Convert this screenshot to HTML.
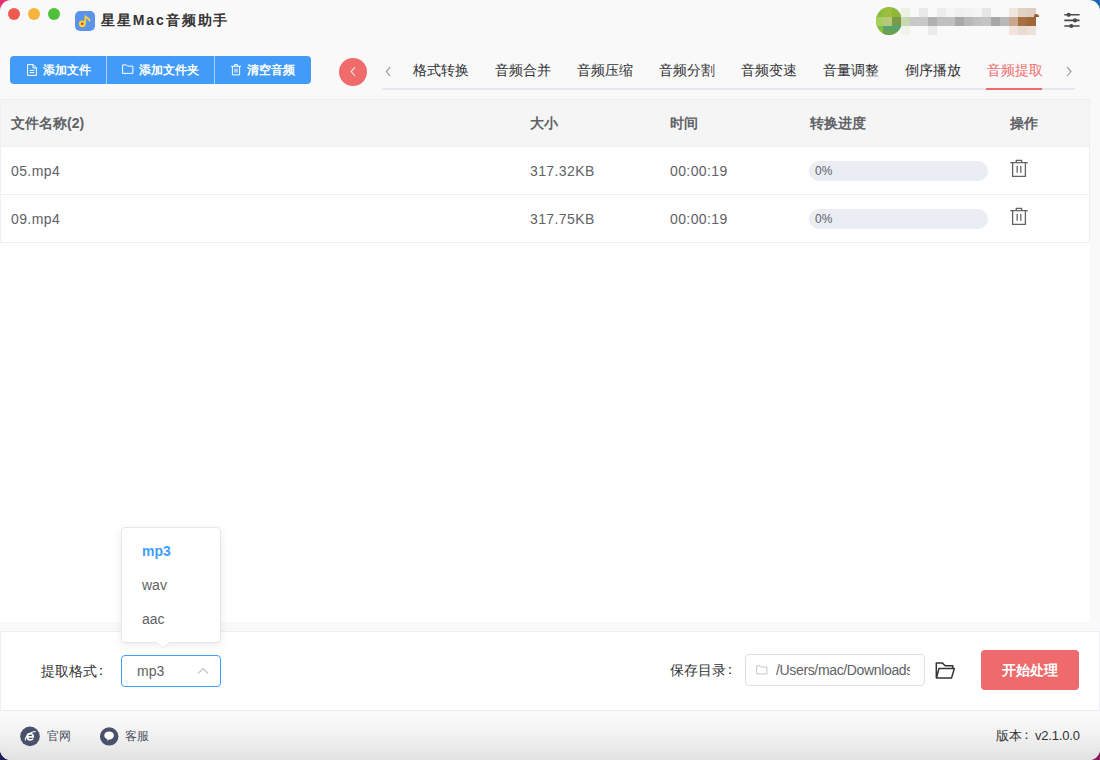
<!DOCTYPE html>
<html><head><meta charset="utf-8">
<style>
*{margin:0;padding:0;box-sizing:border-box}
html,body{width:1100px;height:760px;overflow:hidden;background:#6a2a6a}
body{font-family:"Liberation Sans",sans-serif;position:relative}
.abs{position:absolute}
svg{position:absolute;overflow:visible}
#bgtl{left:0;top:0;width:40px;height:40px;background:#e2306c}
#bgtr{right:0;top:0;width:40px;height:40px;background:#1a64b0}
#bgbl{left:0;bottom:0;width:40px;height:40px;background:#1e1e5a}
#bgbr{right:0;bottom:0;width:40px;height:40px;background:#8a1a5a}
#win{left:0;top:0;width:1100px;height:760px;background:#f9f9f9;border-radius:11px;overflow:hidden}
.tl{width:12px;height:12px;border-radius:50%;top:8px}
.title{left:101px;top:11px;font-size:14px;font-weight:600;color:#333;letter-spacing:1.9px;line-height:18px}
.btns{left:10px;top:56px;width:301px;height:28px;background:#429cf7;border-radius:4px;overflow:hidden}
.btn{top:5px;height:18px;color:#fff;font-size:12px;font-weight:bold;line-height:18px}
.sep{top:0;width:1px;height:28px;background:rgba(255,255,255,.55)}
.circ{left:339px;top:58px;width:28px;height:28px;border-radius:50%;background:#f06c6c}
.tab{top:60px;font-size:14px;color:#303133;line-height:20px;font-weight:500}
.tabline{left:382px;top:88px;width:693px;height:2px;background:#e4e7ed}
.tabact{left:986px;top:88px;width:56px;height:2px;background:#f06c6c}
.main{left:0;top:99px;width:1090px;height:523px;background:#fff}
.table{left:0;top:99px;width:1090px;height:144px;border:1px solid #ebeef5;border-left-color:#f0f0f0}
.thead{left:0;top:0;width:1088px;height:47px;background:#f5f5f5;border-bottom:1px solid #ebeef5}
.row{left:0;width:1088px;height:48px;border-bottom:1px solid #ebeef5}
.th{font-size:14px;font-weight:bold;color:#606266;top:14px;line-height:18px}
.td{font-size:14px;color:#606266;line-height:18px;letter-spacing:.4px}
.prog{width:179px;height:20px;border-radius:10px;background:#ebedf5}
.prog span{position:absolute;left:6px;top:3px;font-size:12px;color:#606266;line-height:14px}
.panel{left:0;top:631px;width:1100px;height:80px;background:#fff;border:1px solid #ebeef5}
.footer{left:0;top:712px;width:1100px;height:48px;background:linear-gradient(#fafafa,#f4f4f4 40%,#e2e2e2)}
.lbl{font-size:14px;color:#333;line-height:18px}
.mos{position:absolute;width:9px;height:9px}
</style></head><body>
<div class="abs" id="bgtl"></div><div class="abs" id="bgtr"></div><div class="abs" id="bgbl"></div><div class="abs" id="bgbr"></div>
<div class="abs" id="win">
  <!-- title bar -->
  <div class="abs tl" style="left:8px;background:#ee5a52"></div>
  <div class="abs tl" style="left:28px;background:#f5b43b"></div>
  <div class="abs tl" style="left:48px;background:#4fbf3c"></div>
  <div class="abs" style="left:75px;top:11px;width:20px;height:20px;border-radius:5px;background:#5a93ea"></div>
  <svg style="left:75px;top:11px" width="20" height="20" viewBox="0 0 20 20">
    <path d="M10.3 12.6V4.4" stroke="#f6d43e" stroke-width="1.6" fill="none"/>
    <path d="M10 4.4C11.8 5.6 14.6 6.2 15.2 8.6C15.5 9.8 15.2 10.8 14.6 11.6C14.4 9.8 13 8.4 10.4 7.6Z" fill="#f6d43e"/>
    <circle cx="7.3" cy="12.8" r="3.4" fill="#f6d43e"/>
    <circle cx="7.3" cy="12.8" r="1.3" fill="#e2402c"/>
  </svg>
  <div class="abs title">星星Mac音频助手</div>

  <!-- mosaic avatar -->
<div class="abs" style="left:0;top:0;width:1100px;height:40px;filter:blur(0.35px)">
<div class="abs" style="left:876px;top:7px;width:26px;height:28px;border-radius:50%;overflow:hidden;background:#86bd3c">
<div class="mos" style="left:7px;top:1px;width:9px;background:#9cbe3c"></div>
<div class="mos" style="left:16px;top:1px;width:9px;background:#90b83a"></div>
<div class="mos" style="left:0px;top:10px;width:7px;background:#a8d060"></div>
<div class="mos" style="left:7px;top:10px;width:9px;background:#b8c878"></div>
<div class="mos" style="left:16px;top:10px;width:9px;background:#7a9a48"></div>
<div class="mos" style="left:7px;top:19px;width:9px;background:#6aa050"></div>
<div class="mos" style="left:16px;top:19px;width:9px;background:#6aa050"></div>
<div class="mos" style="left:7px;top:19px;width:18px;height:3px;background:#4fa47e"></div>
</div>
<div class="mos" style="left:901px;top:8px;width:9px;background:#eef2e2"></div>
<div class="mos" style="left:919px;top:8px;width:9px;background:#e8e8e8"></div>
<div class="mos" style="left:937px;top:8px;width:9px;background:#ececec"></div>
<div class="mos" style="left:946px;top:8px;width:9px;background:#f5f5f5"></div>
<div class="mos" style="left:955px;top:8px;width:9px;background:#f0f0f0"></div>
<div class="mos" style="left:964px;top:8px;width:9px;background:#f2f2f2"></div>
<div class="mos" style="left:973px;top:8px;width:9px;background:#f4f4f4"></div>
<div class="mos" style="left:982px;top:8px;width:9px;background:#e6e6e6"></div>
<div class="mos" style="left:1009px;top:8px;width:9px;background:#efe6e0"></div>
<div class="mos" style="left:1018px;top:8px;width:9px;background:#e2d2c4"></div>
<div class="mos" style="left:1027px;top:8px;width:9px;background:#e0cfc0"></div>
<div class="mos" style="left:901px;top:17px;width:9px;background:#c8d8b0"></div>
<div class="mos" style="left:910px;top:17px;width:9px;background:#c8c8c8"></div>
<div class="mos" style="left:919px;top:17px;width:9px;background:#c8c8c8"></div>
<div class="mos" style="left:928px;top:17px;width:9px;background:#b0b0b0"></div>
<div class="mos" style="left:937px;top:17px;width:9px;background:#c0c0c0"></div>
<div class="mos" style="left:946px;top:17px;width:9px;background:#c0c0c0"></div>
<div class="mos" style="left:955px;top:17px;width:9px;background:#a8a8a8"></div>
<div class="mos" style="left:964px;top:17px;width:9px;background:#b8b8b8"></div>
<div class="mos" style="left:973px;top:17px;width:9px;background:#c0c0c0"></div>
<div class="mos" style="left:982px;top:17px;width:9px;background:#c4c4c4"></div>
<div class="mos" style="left:991px;top:17px;width:9px;background:#a8a8a8"></div>
<div class="mos" style="left:1000px;top:17px;width:9px;background:#b8b8b8"></div>
<div class="mos" style="left:1009px;top:17px;width:9px;background:#c8a890"></div>
<div class="mos" style="left:1018px;top:17px;width:9px;background:#a87040"></div>
<div class="mos" style="left:1027px;top:17px;width:9px;background:#a06838"></div>
<div class="mos" style="left:901px;top:26px;width:9px;background:#f0f4ea"></div>
<div class="mos" style="left:928px;top:26px;width:9px;background:#ebebeb"></div>
<div class="mos" style="left:1009px;top:26px;width:9px;background:#f0e4dc"></div>
<div class="mos" style="left:1018px;top:26px;width:9px;background:#e8dcd2"></div>
<div class="mos" style="left:1027px;top:26px;width:9px;background:#ece2da"></div>
<div class="abs" style="left:1034px;top:14px;width:5px;height:3px;border-radius:2px 3px 0 0;background:#9a5a30"></div>
</div>
  <!-- settings -->
  <svg style="left:1056px;top:6px" width="32" height="28" viewBox="0 0 32 28">
    <g stroke="#4a4a4a" stroke-width="1.6" fill="#4a4a4a">
      <path d="M8.3 8.8H23.6M8.3 14.4H23.6M8.3 20H23.6"/>
      <circle cx="12.7" cy="8.8" r="2.1" stroke="none"/>
      <circle cx="19" cy="14.4" r="2.1" stroke="none"/>
      <circle cx="15.3" cy="20" r="2.1" stroke="none"/>
    </g>
  </svg>

  <!-- toolbar -->
  <div class="abs btns">
    <svg style="left:17px;top:8px" width="10" height="12" viewBox="0 0 10 12">
      <path d="M0.6 0.6H6.2L9.4 3.8V11.4H0.6Z M6 0.6V4H9.4 M2.6 6.4H7.4 M2.6 8.6H7.4" stroke="#fff" stroke-width="1" fill="none"/>
    </svg>
    <div class="abs btn" style="left:33px">添加文件</div>
    <div class="abs sep" style="left:96px"></div>
    <svg style="left:112px;top:8px" width="12" height="10" viewBox="0 0 12 10">
      <path d="M0.6 0.9H4.4L5.4 2.1H10.9V9.4H0.6Z" stroke="#fff" stroke-width="1" fill="none"/>
    </svg>
    <div class="abs btn" style="left:129px">添加文件夹</div>
    <div class="abs sep" style="left:204px"></div>
    <svg style="left:221px;top:8px" width="10" height="12" viewBox="0 0 10 12">
      <path d="M0 2.3H10 M3.6 2.3V0.6H6.4V2.3 M1.4 2.3V10.9H8.6V2.3 M4 4.6V8.6 M6 4.6V8.6" stroke="#fff" stroke-width="1" fill="none"/>
    </svg>
    <div class="abs btn" style="left:237px">清空音频</div>
  </div>
  <div class="abs circ"></div>
  <svg style="left:339px;top:58px" width="28" height="28" viewBox="0 0 28 28">
    <path d="M16 9.2 L12.2 13.6 L16 18" stroke="#fde8e8" stroke-width="1.1" fill="none"/>
  </svg>
  <svg style="left:380px;top:62px" width="16" height="20" viewBox="0 0 16 20">
    <path d="M10.2 5.2 L6.4 9.6 L10.2 14" stroke="#909399" stroke-width="1.1" fill="none"/>
  </svg>
  <svg style="left:1060px;top:62px" width="16" height="20" viewBox="0 0 16 20">
    <path d="M7.2 5.2 L11 9.6 L7.2 14" stroke="#909399" stroke-width="1.1" fill="none"/>
  </svg>
  <div class="abs tabline"></div>
  <div class="abs tabact"></div>
  <div class="abs tab" style="left:413px">格式转换</div>
  <div class="abs tab" style="left:495px">音频合并</div>
  <div class="abs tab" style="left:577px">音频压缩</div>
  <div class="abs tab" style="left:659px">音频分割</div>
  <div class="abs tab" style="left:741px">音频变速</div>
  <div class="abs tab" style="left:823px">音量调整</div>
  <div class="abs tab" style="left:905px">倒序播放</div>
  <div class="abs tab" style="left:987px;color:#f06c6c">音频提取</div>

  <!-- main -->
  <div class="abs main"></div>
  <div class="abs table">
    <div class="abs thead">
      <div class="abs th" style="left:10px">文件名称(2)</div>
      <div class="abs th" style="left:529px">大小</div>
      <div class="abs th" style="left:669px">时间</div>
      <div class="abs th" style="left:809px">转换进度</div>
      <div class="abs th" style="left:1009px">操作</div>
    </div>
    <div class="abs row" style="top:47px">
      <div class="abs td" style="left:10px;top:15px">05.mp4</div>
      <div class="abs td" style="left:529px;top:15px">317.32KB</div>
      <div class="abs td" style="left:669px;top:15px">00:00:19</div>
      <div class="abs prog" style="left:808px;top:14px"><span>0%</span></div>
      <svg style="left:1005px;top:9px" width="26" height="24" viewBox="0 0 26 24">
        <path d="M10.3 6.6V4.3H15.6V6.6 M4.3 6.6H21.8 M6.6 6.6V20.4H19.4V6.6 M11.2 10.1V16.7 M14.8 10.1V16.7" stroke="#606266" stroke-width="1.3" fill="none"/>
      </svg>
    </div>
    <div class="abs row" style="top:95px;border-bottom:none">
      <div class="abs td" style="left:10px;top:15px">09.mp4</div>
      <div class="abs td" style="left:529px;top:15px">317.75KB</div>
      <div class="abs td" style="left:669px;top:15px">00:00:19</div>
      <div class="abs prog" style="left:808px;top:14px"><span>0%</span></div>
      <svg style="left:1005px;top:9px" width="26" height="24" viewBox="0 0 26 24">
        <path d="M10.3 6.6V4.3H15.6V6.6 M4.3 6.6H21.8 M6.6 6.6V20.4H19.4V6.6 M11.2 10.1V16.7 M14.8 10.1V16.7" stroke="#606266" stroke-width="1.3" fill="none"/>
      </svg>
    </div>
  </div>

  <!-- bottom panel -->
  <div class="abs panel"></div>
  <div class="abs lbl" style="left:41px;top:662px">提取格式<span style="position:relative;left:-3px;top:-1.5px">：</span></div>
  <div class="abs" style="left:121px;top:655px;width:100px;height:32px;border:1px solid #409eff;border-radius:4px;background:#fff"></div>
  <div class="abs" style="left:137px;top:662px;font-size:14px;color:#606266;line-height:18px">mp3</div>
  <svg style="left:196px;top:664px" width="14" height="12" viewBox="0 0 14 12">
    <path d="M2 9.5 L7 4.5 L12 9.5" stroke="#c0c4cc" stroke-width="1.1" fill="none"/>
  </svg>

  <div class="abs lbl" style="left:670px;top:661px">保存目录<span style="position:relative;left:-3.5px;top:-1.5px">：</span></div>
  <div class="abs" style="left:745px;top:654px;width:180px;height:32px;border:1px solid #dcdfe6;border-radius:4px;background:#fff;overflow:hidden">
    <svg style="left:10px;top:10px" width="12" height="10" viewBox="0 0 12 10">
      <path d="M0.6 0.9H4.4L5.4 2.1H10.9V8.9H0.6Z" stroke="#c0c4cc" stroke-width="1" fill="none"/>
    </svg>
    <div class="abs" style="left:30px;top:6px;width:134px;overflow:hidden;white-space:nowrap;font-size:14px;color:#606266;line-height:18px;letter-spacing:-.35px">/Users/mac/Downloads</div>
  </div>
  <svg style="left:930px;top:656px" width="30" height="30" viewBox="0 0 30 30">
    <path d="M6.3 22.1V6.9H12.2L15.2 9.7H22.7V12.4 M6.5 22.1L8.9 12.6H24.3L21.5 22.1Z" stroke="#333" stroke-width="1.5" fill="none" stroke-linejoin="round"/>
  </svg>
  <div class="abs" style="left:981px;top:650px;width:98px;height:40px;border-radius:4px;background:#ee6a6d"></div>
  <div class="abs" style="left:1002px;top:661px;font-size:14px;font-weight:bold;color:#fff;line-height:18px">开始处理</div>

  <!-- dropdown -->
  <div class="abs" style="left:121px;top:527px;width:100px;height:116px;background:#fff;border:1px solid #e4e7ed;border-radius:4px;box-shadow:0 2px 8px rgba(0,0,0,.08)"></div>
  <svg style="left:155px;top:641px" width="16" height="8" viewBox="0 0 16 8">
    <path d="M1 1 L8 6.5 L15 1" fill="#fff" stroke="#e4e7ed" stroke-width="1"/>
    <path d="M0 0 H16 L8 5.8Z" fill="#fff"/>
  </svg>
  <div class="abs" style="left:142px;top:542px;font-size:14px;font-weight:bold;color:#409eff;line-height:18px">mp3</div>
  <div class="abs" style="left:142px;top:576px;font-size:14px;color:#606266;line-height:18px">wav</div>
  <div class="abs" style="left:142px;top:610px;font-size:14px;color:#606266;line-height:18px">aac</div>

  <!-- footer -->
  <div class="abs footer"></div>
  <svg style="left:20px;top:726px" width="20" height="20" viewBox="0 0 20 20">
    <circle cx="10" cy="10.4" r="9.8" fill="#48526c"/>
    <path d="M7.3 10.9H13.2C13.2 8.9 12 7.6 10.3 7.6C8.5 7.6 7.2 9 7.2 10.8C7.2 12.7 8.5 14 10.3 14C11.5 14 12.4 13.5 13 12.6" stroke="#fff" stroke-width="1.7" fill="none"/>
    <path d="M5.6 14.6C4.4 13.2 6.4 9.6 10 7.4C13 5.6 15.2 5.3 15.6 6" stroke="#fff" stroke-width="1.1" fill="none"/>
  </svg>
  <div class="abs" style="left:47px;top:728px;font-size:12px;color:#4b5060;line-height:16px;font-weight:500">官网</div>
  <svg style="left:99px;top:726px" width="20" height="20" viewBox="0 0 20 20">
    <circle cx="10.2" cy="10.4" r="9.2" fill="#48526c"/>
    <path d="M10 5.6C12.8 5.6 14.9 7.2 14.9 9.5C14.9 11.9 12.9 13.4 10.4 13.4L8.3 14.8L8.4 13.2C6.5 12.6 5.3 11.2 5.3 9.5C5.3 7.2 7.3 5.6 10 5.6Z" fill="#fff"/>
  </svg>
  <div class="abs" style="left:125px;top:728px;font-size:12px;color:#4b5060;line-height:16px;font-weight:500">客服</div>
  <div class="abs" style="left:996px;top:728px;font-size:13px;color:#333;line-height:16px">版本<span style="position:relative;left:-2px;top:-1px">：</span><span style="letter-spacing:-.2px">v2.1.0.0</span></div>
</div>
</body></html>
